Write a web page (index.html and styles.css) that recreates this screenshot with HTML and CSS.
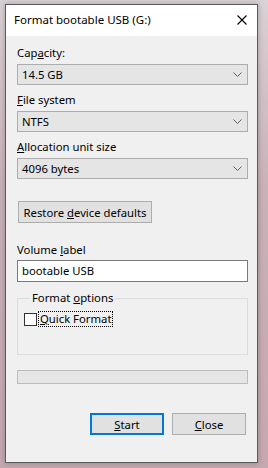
FILE: index.html
```html
<!DOCTYPE html>
<html lang="en">
<head>
  <meta charset="UTF-8" />
  <title>Format bootable USB (G:)</title>
  <link rel="stylesheet" href="styles.css">
</head>
<body>
  <div class="window">
    <div class="titlebar">
      <span class="title">Format bootable USB (G:)</span>
      <svg class="close-x" width="10" height="10" viewBox="0 0 10 10">
        <path d="M0.5 0.5 L9.5 9.5 M9.5 0.5 L0.5 9.5" stroke="#000" stroke-width="1.1" fill="none"/>
      </svg>
    </div>

    <div class="content">
      <label class="field-label first">Cap<u>a</u>city:</label>
      <div class="combo">
        <span>14.5 GB</span>
        <svg class="chevron" width="9" height="5" viewBox="0 0 9 5"><path d="M0.5 0.5 L4.5 4.5 L8.5 0.5" stroke="#5f5f5f" fill="none"/></svg>
      </div>

      <label class="field-label"><u>F</u>ile system</label>
      <div class="combo">
        <span>NTFS</span>
        <svg class="chevron" width="9" height="5" viewBox="0 0 9 5"><path d="M0.5 0.5 L4.5 4.5 L8.5 0.5" stroke="#5f5f5f" fill="none"/></svg>
      </div>

      <label class="field-label"><u>A</u>llocation unit size</label>
      <div class="combo">
        <span>4096 bytes</span>
        <svg class="chevron" width="9" height="5" viewBox="0 0 9 5"><path d="M0.5 0.5 L4.5 4.5 L8.5 0.5" stroke="#5f5f5f" fill="none"/></svg>
      </div>

      <button class="btn restore">Restore <u>d</u>evice defaults</button>

      <label class="field-label volume">Volume <u>l</u>abel</label>
      <div class="textbox">bootable USB</div>

      <fieldset class="group">
        <legend>Format <u>o</u>ptions</legend>
        <div class="check-row">
          <span class="checkbox"></span>
          <span class="check-label"><u>Q</u>uick Format</span>
        </div>
      </fieldset>

      <div class="progress"></div>

      <div class="actions">
        <button class="btn default"><u>S</u>tart</button>
        <button class="btn"><u>C</u>lose</button>
      </div>
    </div>
  </div>
</body>
</html>
```

FILE: styles.css
```css
* { box-sizing: border-box; }
body {
  margin: 0;
  width: 268px;
  height: 468px;
  overflow: hidden;
  font-family: "Segoe UI", "Noto Sans", sans-serif;
  font-size: 11.3px;
  color: #000;
  background: linear-gradient(180deg, #d9d2d6 0%, #c9b2b8 40%, #c4a9b0 100%);
}
u { text-decoration-thickness: 1px; text-underline-offset: 1px; }
.window {
  margin: 4px 0 0 5px;
  width: 253px;
  height: 459px;
  border: 1px solid #5a5a5a;
  background: #f0f0f0;
  box-shadow: 0 0 6px rgba(0, 0, 0, 0.25);
  display: flex;
  flex-direction: column;
}
.titlebar {
  height: 31px;
  background: #fff;
  display: flex;
  align-items: center;
  justify-content: space-between;
  padding: 0 10px 2px 8px;
  flex-shrink: 0;
}
.title { font-size: 11.5px; }
.close-x { display: block; margin-top: 1px; }
.content {
  padding: 0 9px 0 11px;
  display: flex;
  flex-direction: column;
}
.field-label {
  display: block;
  height: 16px;
  line-height: 16px;
  margin-top: 7px;
  margin-bottom: 3px;
}
.field-label.first { margin-top: 9px; }
.field-label.volume { margin-top: 19px; margin-bottom: 2px; }
.combo {
  height: 21px;
  background: #e5e5e5;
  border: 1px solid #adadad;
  display: flex;
  align-items: center;
  justify-content: space-between;
  padding: 0 5px 0 4px;
}
.chevron { display: block; }
.btn {
  font: inherit;
  color: #000;
  height: 22px;
  background: #e1e1e1;
  border: 1px solid #adadad;
  padding: 0;
}
.restore {
  margin-top: 22px;
  margin-left: 1px;
  width: 134px;
}
.textbox {
  height: 22px;
  background: #fff;
  border: 1px solid #7a7a7a;
  padding: 0 4px;
  line-height: 20px;
}
.group {
  margin: 8px 0 0;
  height: 65px;
  border: 1px solid #dcdcdc;
  padding: 6px 0 0 6px;
}
.group legend {
  padding: 0 2px;
  margin-left: 6px;
  line-height: 16px;
}
.check-row {
  display: flex;
  align-items: center;
}
.checkbox {
  width: 13px;
  height: 13px;
  border: 1px solid #333;
  background: #fff;
}
.check-label {
  margin-left: 2px;
  outline: 1px dotted #000;
  line-height: 14px;
  padding: 0 1px;
}
.progress {
  margin-top: 15px;
  height: 14px;
  background: #e6e6e6;
  border: 1px solid #bcbcbc;
}
.actions {
  margin-top: 29px;
  display: flex;
  justify-content: flex-end;
  gap: 8px;
  padding-right: 2px;
}
.actions .btn { width: 74px; }
.btn.default {
  border: 2px solid #0078d7;
}
```
